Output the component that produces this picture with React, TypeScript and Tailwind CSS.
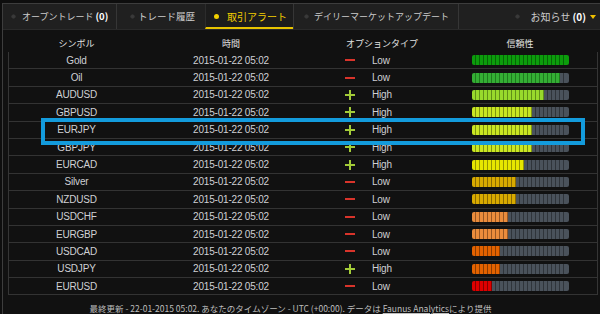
import React from "react";

type Level = "g1" | "g2" | "lime" | "ylime" | "yellow" | "gold" | "lorange" | "dorange" | "red";

const LEVEL: Record<Level, string> = {
  g1: "bg-[#0c9c0c] border-[#066506]",
  g2: "bg-[#34ae34] border-[#1e7a1e]",
  lime: "bg-[#98d92c] border-[#5f8f18]",
  ylime: "bg-[#c9e622] border-[#7e9210]",
  yellow: "bg-[#e6e600] border-[#959500]",
  gold: "bg-[#d8aa00] border-[#8a6a00]",
  lorange: "bg-[#ea8c3c] border-[#985622]",
  dorange: "bg-[#e36200] border-[#8c3c00]",
  red: "bg-[#de0000] border-[#880000]",
};
const GREY = "bg-[#4a525b] border-[#2f343a]";

const ROWS: [string, "+" | "-", number, Level][] = [
  ["Gold", "-", 24, "g1"],
  ["Oil", "-", 22, "g2"],
  ["AUDUSD", "+", 18, "lime"],
  ["GBPUSD", "+", 15, "ylime"],
  ["EURJPY", "+", 15, "ylime"],
  ["GBPJPY", "+", 15, "ylime"],
  ["EURCAD", "+", 13, "yellow"],
  ["Silver", "-", 11, "gold"],
  ["NZDUSD", "-", 11, "gold"],
  ["USDCHF", "-", 9, "lorange"],
  ["EURGBP", "-", 9, "lorange"],
  ["USDCAD", "-", 7, "dorange"],
  ["USDJPY", "+", 7, "dorange"],
  ["EURUSD", "-", 5, "red"],
];

function Bar({ n, level }: { n: number; level: Level }) {
  const segs = [];
  for (let i = 0; i < 24; i++) {
    const color = i < n ? LEVEL[level] : GREY;
    const last = i === 23;
    segs.push(
      <div
        key={i}
        className={`h-full ${color} ${last ? "w-[5px] border-r-0" : "w-[4px] border-r"}`}
      />
    );
  }
  return (
    <div className="flex h-[10px] w-[97px] overflow-hidden rounded-[2px]">{segs}</div>
  );
}

function Sign({ s }: { s: "+" | "-" }) {
  return s === "+" ? (
    <svg width="10" height="10" viewBox="0 0 10 10">
      <rect x="0" y="4" width="10" height="2" fill="#a3cc38" />
      <rect x="4" y="0" width="2" height="10" fill="#a3cc38" />
    </svg>
  ) : (
    <svg width="10" height="10" viewBox="0 0 10 10">
      <rect x="0" y="4" width="10" height="2" fill="#d9342b" />
    </svg>
  );
}

function Dot({ active }: { active?: boolean }) {
  return (
    <span
      className={`inline-block h-[5px] w-[5px] shrink-0 rounded-full ${
        active ? "bg-[#f2d000]" : "bg-[#3a3a3a] shadow-[inset_0_0_1px_#000]"
      }`}
    />
  );
}

export default function App() {
  const jp = { fontFamily: '"Noto Sans CJK JP", "Liberation Sans", sans-serif' };
  return (
    <div
      className="relative h-[314px] w-[600px] overflow-hidden bg-[#0e0e0e] pl-[2px] pt-[3px]"
      style={{ fontFamily: '"Liberation Sans", "Noto Sans CJK JP", sans-serif' }}
    >
      <div className="flex h-full flex-col border-l border-t border-[#3d3d3d] bg-[#111111]">
        {/* Tabs */}
        <div className="flex h-[26px] shrink-0 border-b border-[#2a2a2a] bg-[#202020] text-[9px] text-[#cccccc]" style={jp}>
          <div className="flex w-[114px] items-center border-r border-[#363636] pl-[8px]">
            <Dot />
            <span className="ml-[6px] whitespace-nowrap">
              オープントレード <span className="text-[9.5px] font-bold text-white">(0)</span>
            </span>
          </div>
          <div className="flex w-[88px] items-center pl-[13px]">
            <Dot />
            <span className="ml-[3px] whitespace-nowrap text-[9.5px]">トレード履歴</span>
          </div>
          <div className="flex w-[88px] items-center border-b-2 border-l border-[#e8c400] border-l-[#2c2c2c] bg-[#1c1c1c] pl-[8px] pt-[2px]">
            <Dot active />
            <span className="ml-[8px] whitespace-nowrap text-[10px] text-[#f2cc00]">取引アラート</span>
          </div>
          <div className="flex w-[166px] items-center border-l border-r border-[#363636] pl-[10px]">
            <Dot />
            <span className="ml-[5px] whitespace-nowrap">デイリーマーケットアップデート</span>
          </div>
          <div className="flex flex-1 items-center justify-end pr-[4px]">
            <Dot />
            <span className="ml-[10px] whitespace-nowrap text-[10px]">
              お知らせ <span className="font-bold text-white">(0)</span>
            </span>
            <svg width="6" height="4" viewBox="0 0 6 4" className="ml-[4px]">
              <path d="M0 0 L6 0 L3 4 Z" fill="#f0c000" />
            </svg>
          </div>
        </div>

        {/* Header */}
        <div className="flex h-[22px] shrink-0 items-end pb-[2px] pl-[6px] text-[9px] leading-[12px] text-[#e2e2e2]" style={jp}>
          <div className="w-[135px] text-center">シンボル</div>
          <div className="w-[174px] text-center">時間</div>
          <div className="w-[128px] text-center">オプションタイプ</div>
          <div className="w-[148px] text-center">信頼性</div>
        </div>

        {/* Table */}
        <div className="ml-[5px] mr-[2px] border-l border-r border-[#353535]">
          {ROWS.map(([sym, s, n, lvl]) => (
            <div
              key={sym}
              className="flex h-[17.4px] items-center border-b border-[#333333] text-[10px] tracking-[-0.2px] text-[#cfd0d4]"
            >
              <div className="w-[135px] text-center">{sym}</div>
              <div className="w-[174px] text-center">2015-01-22 05:02</div>
              <div className="w-[27px]" />
              <div className="flex w-[10px] items-center">
                <Sign s={s} />
              </div>
              <div className="w-[17px]" />
              <div className="w-[100px]">{s === "+" ? "High" : "Low"}</div>
              <Bar n={n} level={lvl} />
            </div>
          ))}
        </div>

        {/* Footer */}
        <div className="pr-[22px] pt-[7px] text-center text-[8.5px] leading-[12px] text-[#bdbdbd]" style={jp}>
          最終更新 - 22-01-2015 05:02. あなたのタイムゾーン - UTC (+00:00). データは{" "}
          <span className="underline">Faunus Analytics</span>により提供
        </div>
      </div>

      {/* highlight */}
      <div className="absolute left-[41px] top-[118px] h-[27px] w-[544px] border-4 border-[#139bdc]" />
    </div>
  );
}
